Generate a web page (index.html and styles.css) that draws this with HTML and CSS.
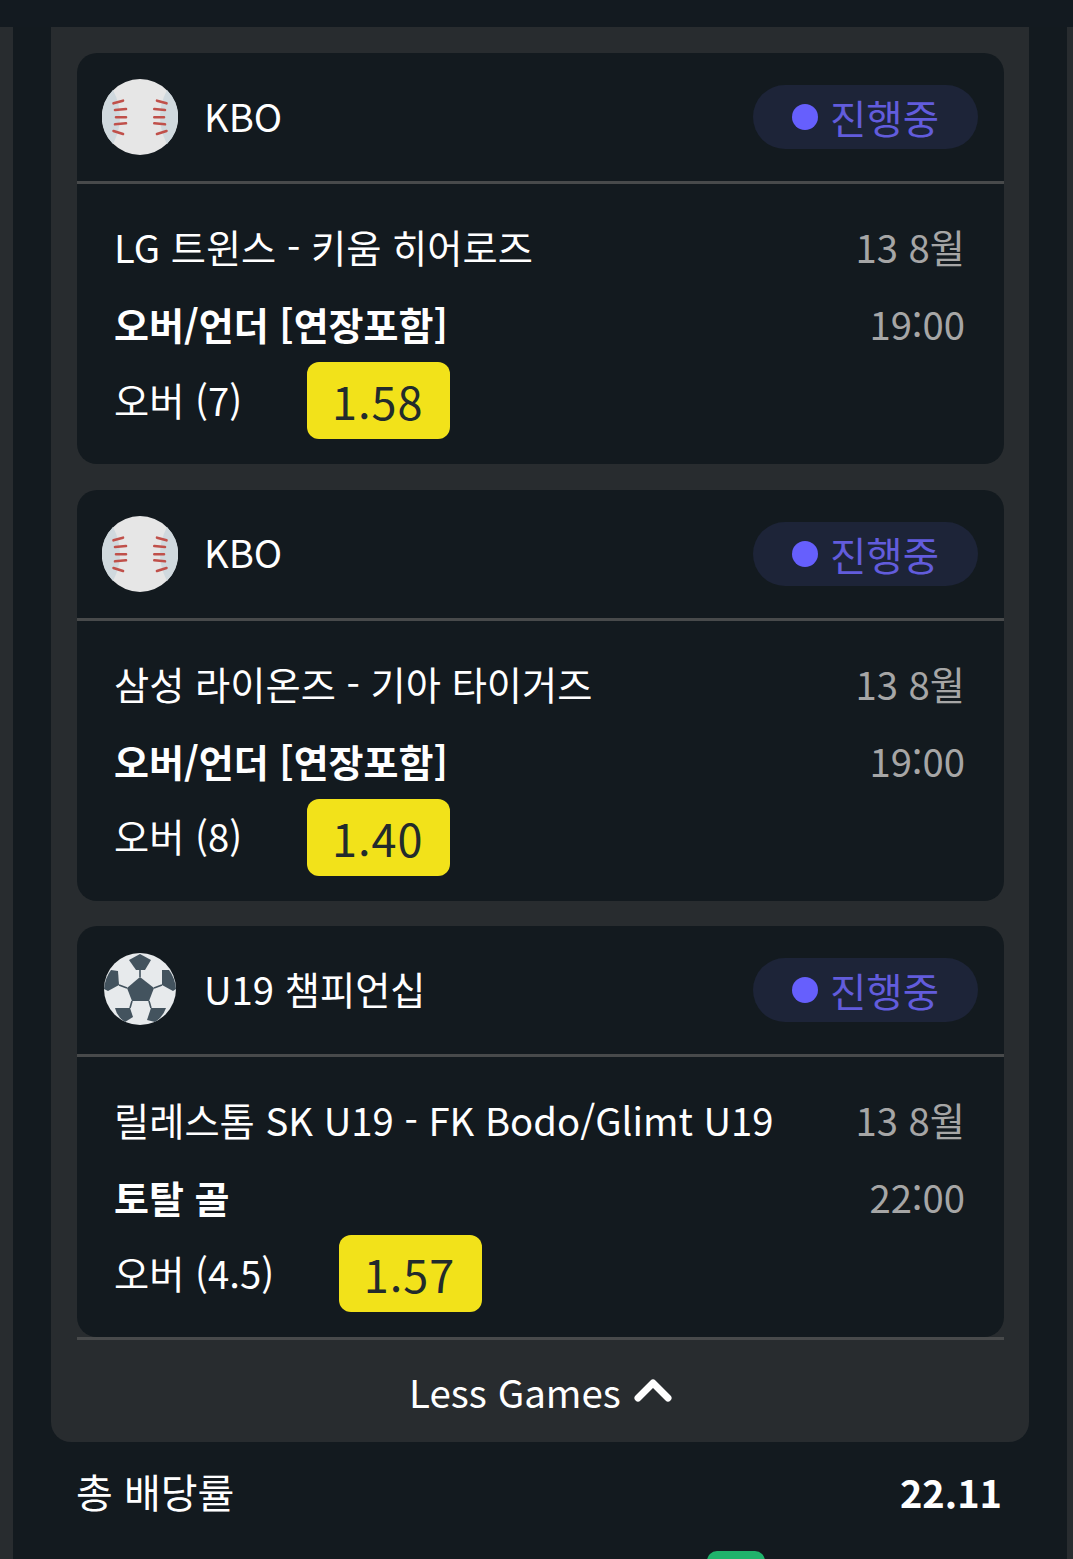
FILE: index.html
```html
<!DOCTYPE html>
<html lang="ko">
<head>
	<meta charset="utf-8">
	<title>베팅 슬립</title>
	<link rel="stylesheet" href="styles.css">
</head>
<body>
<svg width="0" height="0" class="defs">
	<symbol id="baseball" viewBox="0 0 76 76">
		<circle cx="38" cy="38" r="38" fill="#e6e6e6"/>
		<path d="M11 11 A38 38 0 0 0 11 65 Q25 38 11 11Z" fill="#d0d9de"/>
		<path d="M65 11 A38 38 0 0 1 65 65 Q51 38 65 11Z" fill="#d0d9de"/>
		<g stroke="#c0504a" stroke-width="2.6" stroke-linecap="round" fill="none">
			<path d="M11.5 24.3 L21 21.7M13 31 L24 30M14 38.3 L24 38.3M13 45.3 L24 44.3M11.5 52 L21 55"/>
			<path d="M64.5 24.3 L55 21.7M63 31 L52.3 30M62 38.3 L52.3 38.3M63 45.3 L52.3 44.3M64.5 52 L55 55"/>
		</g>
	</symbol>
	<symbol id="soccer" viewBox="0 0 76 76">
		<circle cx="38" cy="37" r="36" fill="#e7eaec"/>
		<g fill="#43535e">
			<path d="M38 25 L52 36 L47 49 L30 49 L25 36Z"/>
			<path d="M27 8 L38 2 L49 8 L43 18 L34 18Z"/>
			<path d="M9 18 L16 19 L17 33 L6 39 L2 37 Q3 26 9 18Z"/>
			<path d="M60 18 L67 18 Q73 26 74 37 L71 39 L60 33Z"/>
			<path d="M13 56 L28 56 L31 65 L23 70 Q15 65 13 56Z"/>
			<path d="M49 56 L64 56 Q61 65 53 70 L45 68Z"/>
		</g>
		<g stroke="#43535e" stroke-width="1.6" fill="none">
			<path d="M38 18 L38 25M17 33 L25 36M60 33 L52 36M30 49 L28 56M47 49 L49 56"/>
		</g>
	</symbol>
</svg>

<div class="topbar"></div>
<div class="shell">
	<div class="panel">
		<div class="games">
			<div class="card">
				<div class="card_head">
					<svg class="sport_icon"><use href="#baseball"/></svg>
					<span class="league">KBO</span>
					<span class="status"><i class="dot"></i>진행중</span>
				</div>
				<div class="card_body">
					<div class="bet">
						<div class="teams">LG 트윈스 - 키움 히어로즈</div>
						<div class="market">오버/언더 [연장포함]</div>
						<div class="pick">
							<span class="pick_name">오버 (7)</span>
							<span class="odds">1.58</span>
						</div>
					</div>
					<div class="when">
						<div class="date">13 8월</div>
						<div class="time">19:00</div>
					</div>
				</div>
			</div>

			<div class="card">
				<div class="card_head">
					<svg class="sport_icon"><use href="#baseball"/></svg>
					<span class="league">KBO</span>
					<span class="status"><i class="dot"></i>진행중</span>
				</div>
				<div class="card_body">
					<div class="bet">
						<div class="teams">삼성 라이온즈 - 기아 타이거즈</div>
						<div class="market">오버/언더 [연장포함]</div>
						<div class="pick">
							<span class="pick_name">오버 (8)</span>
							<span class="odds">1.40</span>
						</div>
					</div>
					<div class="when">
						<div class="date">13 8월</div>
						<div class="time">19:00</div>
					</div>
				</div>
			</div>

			<div class="card">
				<div class="card_head">
					<svg class="sport_icon"><use href="#soccer"/></svg>
					<span class="league">U19 챔피언십</span>
					<span class="status"><i class="dot"></i>진행중</span>
				</div>
				<div class="card_body">
					<div class="bet">
						<div class="teams">릴레스톰 SK U19 - FK Bodo/Glimt U19</div>
						<div class="market">토탈 골</div>
						<div class="pick">
							<span class="pick_name">오버 (4.5)</span>
							<span class="odds">1.57</span>
						</div>
					</div>
					<div class="when">
						<div class="date">13 8월</div>
						<div class="time">22:00</div>
					</div>
				</div>
			</div>
		</div>
		<div class="less">
			Less Games
			<svg class="chevron" viewBox="0 0 38 24"><path d="M4 19 L19 4 L34 19" fill="none" stroke="#fff" stroke-width="7" stroke-linecap="round" stroke-linejoin="round"/></svg>
		</div>
	</div>
	<div class="total">
		<span class="total_label">총 배당률</span>
		<b>22.11</b>
	</div>
	<div class="footer_row"><span class="green_tab"></span></div>
</div>
</body>
</html>
```

FILE: styles.css
```css
html, body{
	margin: 0;
	height: 1559px;
	overflow: hidden;
}
body{
	background-color: #131a1f;
	color: #fff;
	font-family: "Noto Sans CJK KR", "Noto Sans", sans-serif;
	font-size: 38.25px;
}
.defs{
	display: block;
	height: 0;
}

.topbar{
	height: 27px;
	background-color: #131a20;
}
.shell{
	height: 1532px;
	padding: 0 38px 0 38px;
	border-left: 13px solid #282c2f;
	border-right: 6px solid #282c2f;
	background-color: #131a1f;
}

.panel{
	background-color: #282c2f;
	width: 978px;
	border-radius: 0 0 20px 20px;
	padding: 26px 25px 0 26px;
	box-sizing: border-box;
	height: 1415px;
}
.games{
	display: flex;
	flex-direction: column;
	gap: 25.5px;
}

.card{
	background-color: #131a1f;
	border-radius: 20px;
	height: 411px;
}
.card_head{
	display: flex;
	align-items: center;
	height: 128px;
	padding: 0 26px 0 25px;
	border-bottom: 3px solid #484a4b;
}
.sport_icon{
	width: 76px;
	height: 76px;
	flex: none;
}
.league{
	margin-left: 26px;
	flex: 1;
	line-height: 1;
	position: relative;
	top: -1px;
}
.status{
	display: flex;
	align-items: center;
	width: 225px;
	height: 64px;
	box-sizing: border-box;
	padding-left: 39px;
	border-radius: 32px;
	background-color: #1d2438;
	color: #625cdc;
	font-size: 39.5px;
	line-height: 58px;
}
.dot{
	width: 26px;
	height: 26px;
	margin-right: 12px;
	border-radius: 50%;
	background-color: #665ffd;
}

.card_body{
	display: flex;
	justify-content: space-between;
	padding: 38px 39px 0 37px;
}
.teams, .market, .date, .time{
	height: 50px;
	line-height: 50px;
	white-space: nowrap;
}
.market{
	margin-top: 27px;
	font-weight: 700;
	font-size: 38px;
}
.pick{
	display: flex;
	align-items: center;
	margin-top: 13px;
}
.pick_name{
	margin-right: 65px;
	line-height: 48px;
	margin-bottom: 2px;
}
.odds{
	display: block;
	width: 143px;
	height: 77px;
	box-sizing: border-box;
	padding-right: 2px;
	line-height: 77px;
	text-align: center;
	letter-spacing: 1px;
	border-radius: 12px;
	background-color: #f2e21a;
	color: #222b2c;
	font-size: 45px;
}

.when{
	text-align: right;
	color: #a6a6a6;
}
.time{
	margin-top: 27px;
}

.less{
	display: flex;
	align-items: center;
	justify-content: center;
	gap: 13px;
	height: 102px;
	font-size: 38.5px;
	border-top: 3px solid #484a4b;
}
.chevron{
	width: 38px;
	height: 24px;
}

.total{
	display: flex;
	justify-content: space-between;
	align-items: center;
	height: 98px;
	padding: 0 27px 0 25px;
}
.total_label{
	font-size: 40px;
}
.total b{
	font-size: 38px;
}
.footer_row{
	padding: 11px 0 0 656px;
}
.green_tab{
	display: block;
	width: 58px;
	height: 20px;
	border-radius: 10px 10px 0 0;
	background-color: #1fb36b;
}
```
